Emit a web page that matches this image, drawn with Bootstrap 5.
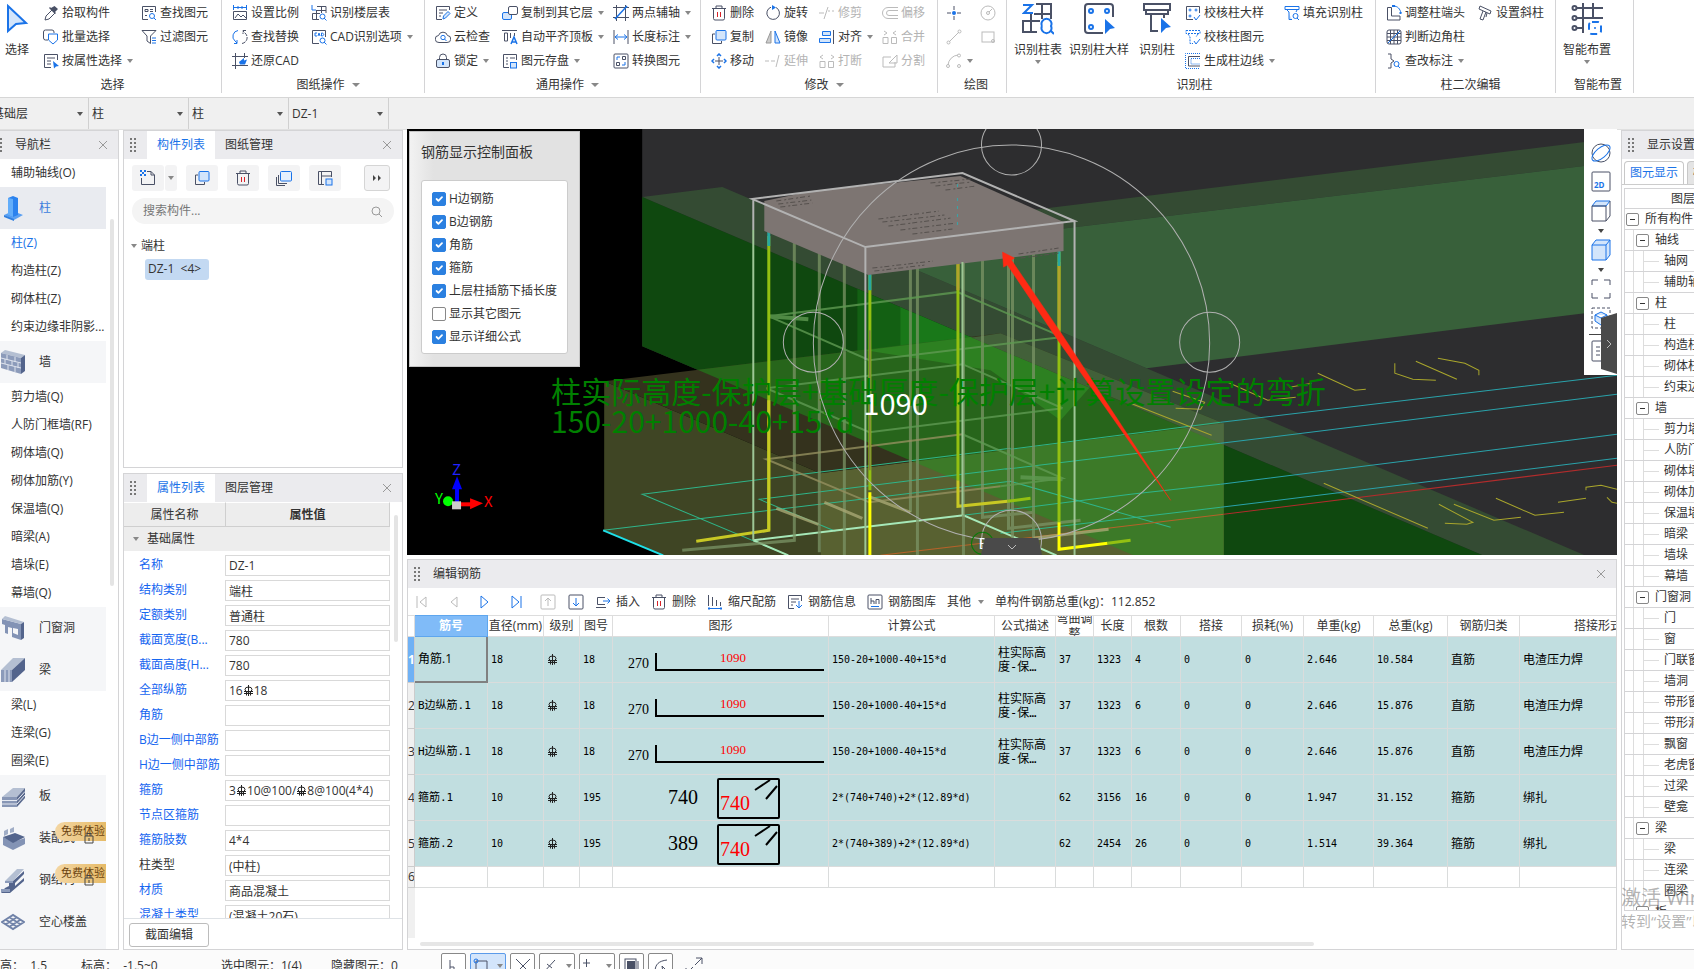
<!DOCTYPE html>
<html lang="zh-CN">
<head>
<meta charset="utf-8">
<meta name="viewport" content="width=device-width, initial-scale=1">
<title>编辑钢筋</title>
<link rel="stylesheet" href="https://cdn.jsdelivr.net/npm/bootstrap@5.3.0/dist/css/bootstrap.min.css">
<style>
:root{--ink:#333;--navy:#4a5166;--blue:#1a73e8;--line:#d4d4d6;--head:#ebebee}
body{font:12px/16px "Open Sans","Noto Sans CJK SC",sans-serif;color:var(--ink);background:#fff}
button{color:inherit;font:inherit;line-height:16px}
svg{display:block;flex:none}
.ic{width:16px;height:16px}
.n{stroke:var(--navy);fill:none}.b{stroke:var(--blue);fill:none}.g{stroke:#bbb;fill:none}.r{stroke:#d8232a;fill:none}
.bf{fill:var(--blue)}.lf{fill:#d3e5fb}
/* ribbon */
.ribbon{height:98px;border-bottom:1px solid #d6d6d6;flex:none}
.rgroup{height:93px;border-right:1px solid var(--line);padding:1px 0 0 10px;flex:none}
.rcols{display:grid;height:72px}
.g1{width:222px;padding-left:4px}.g1 .rcols{grid-template-columns:39px 98px auto}
.g2{width:203px}.g2 .rcols{grid-template-columns:79px auto}
.g3{width:276px}.g3 .rcols{grid-template-columns:67px 111px auto}
.g4{width:237px}.g4 .rcols{grid-template-columns:54px 54px 63px auto}
.g5{width:69px;padding-left:8px}.g5 .rcols{grid-template-columns:34px auto}
.g6{width:369px;padding-left:7px}.g6 .rcols{grid-template-columns:55px 70px 46px 99px auto}
.g7{width:180px}.g7 .rcols{grid-template-columns:91px auto}
.g8{width:78px;padding-left:7px}.g8 .rcols{grid-template-columns:auto}
.tool{border:0;background:none;padding:0;height:24px;display:flex;align-items:center;gap:3px;white-space:nowrap}
.tool:disabled{color:#b3b3b3}
.bigtool{border:0;background:none;padding:1px 0 0;display:flex;flex-direction:column;align-items:center;justify-self:start;align-self:start;gap:6px;white-space:nowrap}
.bigtool .bi{width:32px;height:34px}
.g1 .bi{width:26px}
.cr{width:0;height:0;border:3px solid transparent;border-top:4px solid #888;border-bottom:0;margin-left:2px}
.bigtool .cr{margin:-4px 0 0}
.rlabel{height:24px;display:flex;align-items:center;justify-content:center;gap:5px}
.rlabel .cr{border-width:4px 4px 0}
/* selectors */
.pickers{height:32px;background:#f0f0f0;border-bottom:1px solid #e0e0e0;flex:none}
.pick{width:100px;border-right:1px solid #d0d0d0;position:relative;overflow:hidden}
.pick:first-child{width:89px}
.pick select{appearance:none;border:0;background:none;width:100%;height:31px;padding:0 16px 0 3px;color:var(--ink)}
.pick:first-child select{width:100px;margin-left:-11px}
.pick::after{content:"";position:absolute;right:5px;top:14px;border:3px solid transparent;border-top:4px solid #555;border-bottom:0;pointer-events:none}
/* shared panel parts */
.work{gap:4px;min-height:0}
.pane{border:1px solid var(--line);background:#fff;min-height:0}
.phead{height:28px;background:var(--head);flex:none;white-space:nowrap}
.grip{width:7px;height:14px;background:radial-gradient(circle at 1px 1px,#777 1px,transparent 1px) 0 0/4px 4px;flex:none;margin:0 6px}
.navpane .grip{width:3px;margin:0 6px 0 0}
.ptitle{padding-left:6px}
.xbtn{border:0;background:none;padding:0;width:10px;height:10px;margin:0 10px 0 auto}
.thumb{width:4px;border-radius:2px;background:#e4e4e4}
/* navigation */
.navpane{width:119px;flex:none;border-left:0}
.navlist{width:106px;overflow:hidden;flex:none}
.navlist a{display:flex;align-items:center;height:28px;padding-left:11px;white-space:nowrap;color:var(--ink);text-decoration:none}
.navlist a.grp{height:42px;background:#f5f6f8;padding-left:1px;gap:14px;position:relative}
.navlist a.grp.on{background:#e9ebf0;color:#3b7ddd}
.navlist a.cur{color:#1a73e8}
.navlist svg.ni{width:24px;height:26px}
.free{position:absolute;left:55px;top:5px;width:51px;height:19px;border-radius:10px 0 0 10px;background:linear-gradient(90deg,#f3d6a3,#e6bb68);color:#6b430f;padding:1px 0 0 6px;font-size:11px}
.lock{position:absolute;left:84px;top:14px;width:10px;height:14px}
.thumb.nv{margin:60px 0 0 4px;height:367px}
/* component list */
.side{width:280px;flex:none;gap:5px}
.complist{height:338px;flex:none}
.tab{border:0;background:none;padding:0 10px;height:28px}
.tab.on{background:#fff;color:var(--blue);margin-left:4px}
.ctools{gap:9px;padding:6px 10px 0 8px}
.sq{border:0;background:#f3f3f4;border-radius:3px;width:32px;height:26px;display:flex;align-items:center;justify-content:center;padding:0}
.sq.nar{width:12px;margin-left:-8px}.sq.nar .cr{margin:0}
.sq.more{width:26px;border:1px solid #d5d5d5;margin-left:14px}
.find{height:26px;border-radius:13px;background:#f4f4f4;margin:7px 8px 0;padding:0 12px 0 11px}
.find input{border:0;background:none;flex:1;min-width:0;padding:0;color:#555;outline:0}
.find input::placeholder{color:#777;opacity:1}
.node{padding:14px 0 0 7px}
.pill{background:#c3d9f2;border-radius:3px;height:21px;padding:2px 3px;width:64px;white-space:pre;margin:5px 0 0 21px}
/* properties */
.pscroll{height:0;min-height:0}
.props{display:grid;grid-template-columns:101px 1fr;width:266px;flex:none;align-content:start;overflow:hidden}
.props>*{height:25px}
.props .h{background:#ededed;border-bottom:1px solid #cfcfcf;border-top:1px solid #fff;display:flex;align-items:center;justify-content:center}
.props .h+.h{border-left:1px solid #cfcfcf;font-weight:700;border-right:1px solid #cfcfcf}
.props .sec{grid-column:1/3;background:#ededed;display:flex;align-items:center;padding-left:9px;gap:8px;height:24px;margin-bottom:2px}
.props label,.props .lb{color:#1565f0;padding:4px 0 0 15px;white-space:nowrap;overflow:hidden}
.props .dk{color:var(--ink)}
.props input,.props .fld{border:1px solid #d9d9d9;height:21px;margin:2px 0 2px;padding:0 3px;width:100%;min-width:0;color:var(--ink);background:#fff;display:flex;align-items:center;white-space:nowrap}
.phi{width:11px;height:12px;display:inline-block}
.thumb.pv{height:127px;margin:13px 0 0 4px}
.sectrow{height:30px;padding:2px 0 0 5px}
.sectbtn{width:80px;height:24px;border:1px solid #bcbcbc;border-radius:3px;background:#fff;padding:0}
/* 3D view */
.mid{min-width:0;gap:4px;margin-top:-1px}
.view{height:426px;position:relative;overflow:hidden;background:#000;flex:none}
.view>svg{width:100%;height:426px}
.ctrl{position:absolute;left:2px;top:2px;width:171px;height:236px;background:linear-gradient(90deg,#f2f2f2,#e2e2e2 14%);border:1px solid #c4c4c4;padding:11px}
.ctrl h2{font-size:14px;line-height:18px;font-weight:400;margin:0 0 19px}
.ctrl .bx{background:#fff;border:1px solid #ccc;border-radius:3px;height:174px;padding:6px 0 0 10px}
.ctrl .form-check{min-height:23px;height:23px;margin:0;padding:0;display:flex;align-items:center;gap:3px;white-space:nowrap}
.ctrl .form-check-input{width:14px;height:14px;margin:0;float:none;border:1px solid #888;border-radius:2px}
.ctrl .form-check-input:checked{background-color:#2b80e0;border-color:#2b80e0}
.vbar{position:absolute;right:0;top:0;width:33px;height:246px;background:#fff;display:flex;flex-direction:column;align-items:center;padding-top:13px;gap:7px}
.vbar svg{width:20px;height:22px}
.vbar button{border:0;background:none;padding:0}
.vbar .cr{margin:0 0 -1px;border-top-color:#444}
.vbar hr{width:24px;margin:-2px 0;border-top:1px solid #444;opacity:1}
.flap{position:absolute;background:#4a4a4a;color:#bbb;border:0;padding:0;display:flex;align-items:center;justify-content:center}
.flap.rt{right:0;top:184px;width:16px;height:61px;clip-path:polygon(100% 0,0 8%,0 92%,100% 100%)}
.flap.bt{left:574px;bottom:0;width:61px;height:17px;clip-path:polygon(6% 0,94% 0,100% 100%,0 100%)}
/* rebar editor */
.etools{height:27px;padding:0 8px;white-space:nowrap;flex:none}
.etools .tool{gap:5px}
.steps{gap:15px;margin-right:15px}
.acts{gap:11px;margin-left:11px}
.ewrap{overflow:hidden;flex:1;min-height:0;display:flex;flex-direction:column}
.tgrow{flex:1;width:7px;background:#f0f0f0}
.rebar{table-layout:fixed;width:1269px;border-collapse:separate;border-spacing:0;flex:none}
.rebar col:nth-child(1){width:7px}.rebar col:nth-child(2){width:73px}.rebar col:nth-child(3){width:56px}
.rebar col:nth-child(4){width:36px}.rebar col:nth-child(5){width:33px}.rebar col:nth-child(6){width:216px}
.rebar col:nth-child(7){width:166px}.rebar col:nth-child(8){width:61px}.rebar col:nth-child(9){width:38px}
.rebar col:nth-child(10){width:38px}.rebar col:nth-child(11){width:49px}.rebar col:nth-child(12){width:61px}
.rebar col:nth-child(13){width:62px}.rebar col:nth-child(14){width:70px}.rebar col:nth-child(15){width:74px}
.rebar col:nth-child(16){width:72px}.rebar col:nth-child(17){width:157px}
.rebar th{height:22px;border:1px solid #ddd;border-width:1px 1px 1px 0;font-weight:400;text-align:center;padding:0;white-space:nowrap;overflow:hidden}
.rebar th.sel{background:#80bbf8;color:#fff;font-weight:700;border-color:#5ea6ee}
.rebar th .two{height:20px;line-height:15px;white-space:normal;display:flex;align-items:center;justify-content:center;margin:0 -1px}
.rebar td{height:46px;background:#c1dee0;border:1px solid #dadcdc;border-width:0 1px 1px 0;padding:0 3px;vertical-align:middle;font-family:"DejaVu Sans Mono","Noto Sans CJK SC",monospace;font-size:10px;line-height:14px;color:#000;overflow:hidden;white-space:nowrap}
.rebar td.zh{font-size:12px}
.rebar td.mx{font-size:11px}
.rebar td.ds{font-size:12px;line-height:14px;white-space:normal}
.rebar td.sp{padding:0}
.rebar td.act{font:12px/16px "Open Sans","Noto Sans CJK SC",sans-serif;border-right:2px solid #808080;border-bottom:2px solid #808080}
.rebar td.no{background:#f0f0f0;padding:0;font:12px/16px "Open Sans",sans-serif;color:#333;border-color:#ccc}
.rebar td.no.on{background:#6fb1f5;color:#fff;font-weight:700}
.rebar .last td{height:21px;background:#fff}
.rebar .last td.no{background:#f0f0f0}
.rebar svg text{font-family:"Liberation Serif",serif}
.hbar{height:4px;width:74%;margin:0 0 3px 12px;border-radius:2px;background:#e6e6e6;flex:none}
/* display settings */
.disp{flex:none;width:73px;border-right:0;overflow:hidden;white-space:nowrap;position:relative}
.dtabs{height:26px;padding:2px 0 0 2px;border-bottom:1px solid #ccc;gap:3px}
.dtabs button{border:1px solid #c8c8c8;border-bottom:0;border-radius:4px 4px 0 0;background:#e4e4e4;padding:0 5px;color:#333;flex:none}
.dtabs .on{background:#fff;color:var(--blue)}
.tree{margin:3px 0 0 2px;padding:0;border:1px solid var(--line);border-right:0;list-style:none;height:723px;overflow:hidden}
.tree li{height:21px;border-bottom:1px solid var(--line);display:flex;align-items:center;gap:6px;padding-left:1px}
.tree .c2{padding-left:11px;background:linear-gradient(#ddd,#ddd) 8px 0/1px 100% no-repeat}
.tree .c3{padding-left:39px;background:linear-gradient(#ddd,#ddd) 8px 0/1px 100% no-repeat,linear-gradient(#ddd,#ddd) 18px 0/1px 100% no-repeat,linear-gradient(#ddd,#ddd) 18px 10px/16px 1px no-repeat}
.tree i{width:13px;height:13px;border:1px solid #888;border-radius:2px;background:linear-gradient(#333,#333) center/5px 1px no-repeat #fff;flex:none}
.tree .th{padding-left:46px;height:20px}
.wmark{position:absolute;left:-1px;bottom:17px;color:rgba(130,130,130,.6);font:15px/22px "Open Sans","Noto Sans CJK SC",sans-serif}
.wmark b{font-weight:400;font-size:20px;line-height:24px;display:block}
/* status */
.status{height:19px;background:#fbfbfb;overflow:hidden;flex:none;padding-top:3px;white-space:nowrap;position:relative;align-items:flex-start}
.status span{line-height:26px}
.status .s1{width:81px;text-indent:-12px}.status .s2{width:140px}.status .s3{width:110px}.status .s4{width:110px}
.sbt{height:26px;border:1px solid #888;border-radius:2px;background:#fff;display:flex;align-items:center;justify-content:center;width:25px;padding:0;margin-right:4px}
.sbt.w{width:36px}.sbt.on{background:#d3e5fb;border-color:#5b9bea}
</style>
</head>
<body class="d-flex flex-column vh-100 overflow-hidden">

<svg width="0" height="0" class="position-absolute">
<symbol id="i-pickr" viewBox="0 0 16 16"><path d="M9 5l3 3-6 6-4 1 1-4z" class="n"/><path d="M11.500 1l3.500 3-3 3 1 1-1 1-6-6 1-1 1 1z" fill="#4a5166"/></symbol>
<symbol id="i-batch" viewBox="0 0 16 16"><path d="M5 11H2.500A2 2 0 0 1 .5 9V3a2 2 0 0 1 2-2H9a2 2 0 0 1 2 2v1" class="n"/><path d="M5.500 5h9v6l-4.500 4-4.500-4z" class="b"/></symbol>
<symbol id="i-attr" viewBox="0 0 16 16"><path d="M8 14.500H1.500v-13h13V7M4 5h8M4 8h4M4 11h4" class="n"/><path d="M10 8l6 5-3 .5-2 2z" class="bf"/></symbol>
<symbol id="i-find" viewBox="0 0 16 16"><path d="M7 14.500H1.500v-13h13V7M4 4.500h3v2H4zM9 4.500h3M9 6.500h3M4 10.500h2" class="n"/><circle cx="11" cy="11" r="2.500" class="b"/><path d="M13 13l2 2" class="b"/></symbol>
<symbol id="i-filter" viewBox="0 0 16 16"><path d="M1 1.500h14L9.500 7v7.500L6 12V7z" class="n"/><path d="M11 9h4M11 11.500h4M11 14h4" class="b"/></symbol>
<symbol id="i-scale" viewBox="0 0 16 16"><path d="M1 2.500h14M1.500 0v5M14.500 0v5M6 1v3M10 1v3" class="b"/><path d="M1.500 6.500v8h13v-8zM3 13l3-4 3 3 2-2 3 3" class="n"/></symbol>
<symbol id="i-repl" viewBox="0 0 16 16"><path d="M6 1.500A6 6 0 0 0 3 12l2 2M2 14.500h3V11" class="b"/><path d="M10 14.500A6 6 0 0 0 13 4l-2-2M14 1.500h-3V5" class="n" stroke-dasharray="4 1"/></symbol>
<symbol id="i-rest" viewBox="0 0 16 16"><path d="M3.500 0v16M12.500 0v5M0 3.500h16M0 12.500h16" class="n"/><path d="M7 9l5-4v2.500l3-1-2 5H8z" class="bf"/></symbol>
<symbol id="i-floor" viewBox="0 0 16 16"><path d="M1 0v5h4" class="b"/><path d="M6 1.500h9V8M5.500 5.500H15M10.500 1v7M8 14.500H1.500V8.500H9M5.500 5v9" class="n"/><circle cx="11.500" cy="11.500" r="2.500" class="b"/><path d="M13 13l2.500 2.500" class="b"/></symbol>
<symbol id="i-cad" viewBox="0 0 16 16"><path d="M8 14.500H1.500v-13h13V8" class="n"/><path d="M6 4H4v3h2M7 7l1-3 1 3M10.500 4v3c3 0 3-3 0-3" class="b"/><circle cx="11.500" cy="11.500" r="2.500" class="b"/><path d="M13 13l2.500 2.500" class="b"/></symbol>
<symbol id="i-def" viewBox="0 0 16 16"><path d="M7 14.500H1.500v-13h13V5M4 5h8M4 8h4M4 11h2" class="n"/><path d="M8 14l.5-3L13 6.500l2 2L10.500 13z" class="b lf"/></symbol>
<symbol id="i-cloud" viewBox="0 0 16 16"><path d="M4 13.500a3.500 3.500 0 0 1-.5-7 4.700 4.700 0 0 1 9 0 3.500 3.500 0 0 1-.5 7z" class="n"/><circle cx="8" cy="8.500" r="2.200" class="b"/><path d="M9.500 10l2 2" class="b"/></symbol>
<symbol id="i-lock" viewBox="0 0 16 16"><path d="M4.500 7V4.500a3.500 3.500 0 0 1 7 0V7" class="n"/><rect x="1.500" y="6.500" width="13" height="8" rx="1.500" class="n lf"/><path d="M8 9v3" class="b" stroke-width="2"/></symbol>
<symbol id="i-copyl" viewBox="0 0 16 16"><rect x=".5" y="7.500" width="9" height="7" rx="1.500" class="b lf"/><rect x="6.500" y="1.500" width="9" height="8" rx="1.500" stroke="#4a5166" fill="#fff"/></symbol>
<symbol id="i-align" viewBox="0 0 16 16"><path d="M0 1.500h15M2.500 4v8h3V4zM8.500 4v5M12.500 4v3" class="n"/><path d="M9 15l3-7 3 7M10 13h4" class="b" stroke-width="1.500"/></symbol>
<symbol id="i-save" viewBox="0 0 16 16"><path d="M7 14.500H1.500v-13h13V7M4 5h2M8 5h5M4 8h2M4 11h2" class="n"/><rect x="8.500" y="9.500" width="6" height="5.500" class="b lf"/></symbol>
<symbol id="i-two" viewBox="0 0 16 16"><path d="M3.500 0v16M12.500 0v16M0 2.500h16M0 12.500h16" class="n"/><path d="M2 14L14 1" class="b" stroke-width="1.500"/></symbol>
<symbol id="i-len" viewBox="0 0 16 16"><path d="M1 1v14M15 1v14" class="n"/><path d="M2 8h12M5 5.500L2 8l3 2.500M11 5.500L14 8l-3 2.500" class="b"/></symbol>
<symbol id="i-conv" viewBox="0 0 16 16"><rect x="1" y="1" width="14" height="14" rx="1" class="n"/><path d="M9.500 3.500h3v3h-3zM3.500 9.500h3v3h-3z" class="n"/><path d="M4 7V4h3M12 9v3H9" class="b"/></symbol>
<symbol id="i-del" viewBox="0 0 16 16"><path d="M1 3.500h14M5 3V1h6v2M2.500 4v9.500a1.500 1.500 0 0 0 1.500 1.500h8a1.500 1.500 0 0 0 1.500-1.500V4" class="n"/><path d="M6.500 7v5M9.500 7v5" class="r"/></symbol>
<symbol id="i-copy" viewBox="0 0 16 16"><path d="M4 5H1.500v9.500h9V12" class="n"/><rect x="5" y="1.500" width="10" height="9.500" rx="1" class="b lf"/></symbol>
<symbol id="i-move" viewBox="0 0 16 16"><path d="M8 4v8M4 8h8" class="n"/><path d="M6 3l2-2 2 2M6 13l2 2 2-2M3 6L1 8l2 2M13 6l2 2-2 2" class="b" stroke-width="1.500"/></symbol>
<symbol id="i-rot" viewBox="0 0 16 16"><path d="M6 2.200a6.300 6.300 0 1 0 5 .3" class="n"/><path d="M7 0l4 2.500L7 5z" class="bf"/></symbol>
<symbol id="i-mir" viewBox="0 0 16 16"><path d="M6 2v12H1z" fill="#ccc" stroke="#999"/><path d="M10 2v12h5z" class="b lf"/></symbol>
<symbol id="i-ext" viewBox="0 0 16 16"><path d="M0 8h4M6 8h4M11 14l3-12" class="g"/></symbol>
<symbol id="i-trim" viewBox="0 0 16 16"><path d="M0 8h5M5 14L9 2M9 6h2M13 6h2" class="g"/></symbol>
<symbol id="i-dui" viewBox="0 0 16 16"><path d="M14.500 1v14" class="n"/><path d="M3.500 2.500h8v4h-8zM.5 9.500h11v4H.5z" class="b lf"/></symbol>
<symbol id="i-brk" viewBox="0 0 16 16"><path d="M1 8.500h5v6H1zM9.500 8.500h5v6h-5zM4 2L1 4l3 2M12 2l3 2-3 2" class="g"/></symbol>
<symbol id="i-off" viewBox="0 0 16 16"><path d="M16 2.500H6a5.500 5.500 0 0 0 0 11h10M16 5.500H7a2.500 2.500 0 0 0 0 5h9" class="g"/></symbol>
<symbol id="i-mrg" viewBox="0 0 16 16"><path d="M1 8.500h5v6H1zM9.500 8.500h5v6h-5zM2 2l3 2-3 2M14 2l-3 2 3 2" class="g"/></symbol>
<symbol id="i-spl" viewBox="0 0 16 16"><path d="M9 4H1v10h12V9M7 10l8-8v8z" class="g"/></symbol>
<symbol id="i-pt" viewBox="0 0 16 16"><path d="M8 1v4M8 11v4M1 8h4M11 8h4" class="n"/><circle cx="8" cy="8" r="2" class="bf"/></symbol>
<symbol id="i-circ" viewBox="0 0 16 16"><circle cx="8" cy="8" r="7" class="g"/><circle cx="8" cy="8" r="1.500" class="g"/><path d="M9 7l3-3" class="g"/></symbol>
<symbol id="i-line" viewBox="0 0 16 16"><path d="M3 13L13 3" class="g"/><circle cx="2.500" cy="13.500" r="1.500" class="g"/><circle cx="13.500" cy="2.500" r="1.500" class="g"/></symbol>
<symbol id="i-rect" viewBox="0 0 16 16"><rect x="2" y="3" width="12" height="10" class="g"/><circle cx="13" cy="12" r="1.500" class="g"/></symbol>
<symbol id="i-arc" viewBox="0 0 16 16"><path d="M2 12A11 11 0 0 1 12 2" class="g"/><circle cx="2" cy="13" r="1.500" class="g"/><circle cx="13" cy="2.500" r="1.500" class="g"/><circle cx="13" cy="13" r="1.500" class="g"/></symbol>
<symbol id="i-chk" viewBox="0 0 16 16"><path d="M8 14.500H1.500v-13h13V8" class="n"/><g class="b"><circle cx="5" cy="5" r="1"/><circle cx="11" cy="5" r="1"/><circle cx="5" cy="11" r="1"/><path d="M9 12l2 3 4-5"/></g></symbol>
<symbol id="i-chk2" viewBox="0 0 16 16"><g class="b"><path d="M1 1.500h14v3H1zM3 5l2 3v6.500h3M13 5l-2 3" stroke-dasharray="2 1"/><path d="M9 12l2 3 4-5"/></g></symbol>
<symbol id="i-edge" viewBox="0 0 16 16"><path d="M15 .5H.5v15H15M15 5.500H6V11h9" class="b" stroke-dasharray="1 1"/><path d="M15 3.500H3.500v9.500H15" class="n"/></symbol>
<symbol id="i-fill" viewBox="0 0 16 16"><g class="b"><path d="M1 1.500h14v3H1z"/><path d="M3 5l2 2v7.500h3M13 5l-1 2" class="lf"/><circle cx="11.500" cy="11" r="2.500"/><path d="M13 13l2 2"/></g></symbol>
<symbol id="i-end" viewBox="0 0 16 16"><path d="M1.500 2.500h4V11H14v4H1.500z" class="n"/><path d="M7 1c5 0 7 3 8 7" class="b"/><path d="M6 0h3v2H6zM13.500 7h2v2h-2z" class="bf"/></symbol>
<symbol id="i-corner" viewBox="0 0 16 16"><rect x="1" y="1" width="14" height="14" rx="2" class="n"/><path d="M4.500 1v14M8 1v14M11.500 1v14M1 4.500h14M1 8h14M1 11.500h14" class="n"/><path d="M2 14L14 2" class="b"/></symbol>
<symbol id="i-mark" viewBox="0 0 16 16"><path d="M2 1h3v5l3 2-3 2v5H2" class="n"/><circle cx="10.500" cy="11" r="2.500" class="b"/><path d="M12 13l2 2" class="b"/></symbol>
<symbol id="i-incl" viewBox="0 0 16 16"><path d="M3 1l11 5-1 3L2 4zM6 6l-3 8 3 1 3-8M10 8l-1 4" class="n"/></symbol>
<symbol id="i-new" viewBox="0 0 16 16"><path d="M7 1.500h4L14.500 5v9.500h-13V8M11 1.500V5h3.500" class="n"/><path d="M0 0h2v2H0zM4 0h2v2H4zM2 2h2v2H2zM0 4h2v2H0zM4 4h2v2H4z" class="bf"/></symbol>
<symbol id="i-layers" viewBox="0 0 16 16"><path d="M.5 7v8.500H9M2.500 5v8.500H11" class="n"/><rect x="4.500" y="1.500" width="11" height="9.500" rx="1" fill="#e5f0fd" stroke="#1a73e8"/></symbol>
<symbol id="i-sv" viewBox="0 0 16 16"><path d="M7 14.500H1.500v-13h13V7M4.500 2v12M4.500 6h10" class="n"/><rect x="9" y="9" width="6" height="6" class="b lf"/></symbol>
<symbol id="i-ins" viewBox="0 0 16 16"><path d="M10 3.500H2.500v7H10M1 13.500h10" class="n"/><path d="M8 7h7M12.500 4.500L15 7l-2.500 2.500" class="b"/></symbol>
<symbol id="i-ruler" viewBox="0 0 16 16"><path d="M1.500 1v11M5.500 3v9M9.500 6v6M13.500 8v4" class="n"/><path d="M1 14.500h14M2 13v3M14 13v3" class="b"/></symbol>
<symbol id="i-info" viewBox="0 0 16 16"><path d="M7 14.500H1.500v-13h13V7M4 5h8M4 8h5M4 11h2" class="n"/><path d="M12 7v7M9 11l3 3 3-3" class="b"/></symbol>
<symbol id="i-lib" viewBox="0 0 16 16"><rect x="1" y="1" width="14" height="14" rx="1" class="n"/><path d="M4 4v6M4 7h3v3M9 10V5.500h3V10" class="n"/><path d="M4 12.500h8" class="b"/></symbol>
<symbol id="i-x" viewBox="0 0 10 10"><path d="M1 1l8 8M9 1L1 9" stroke="#999" fill="none"/></symbol>
<symbol id="i-phi" viewBox="0 0 11 12"><path d="M5.500 0v11M1 6.500h9M1 8.500h9M3.500 6.500v4M7.500 6.500v4" fill="none" stroke="#222"/><ellipse cx="5.500" cy="4.500" rx="3.500" ry="2.500" fill="none" stroke="#222"/></symbol>
<symbol id="i-slab" viewBox="0 0 24 26"><path d="M1 14L12 5h12l-8 9z" fill="#b4bfd2"/><path d="M1 14h15v10H1z" fill="#8796b5"/><path d="M16 14l8-9v10l-8 9z" fill="#5a6a8e"/><path d="M1 17.500h15l8-9M1 21h15l8-9" stroke="#e6eaf2" fill="none"/></symbol>
</svg>

<header class="ribbon d-flex">
 <div class="rgroup g1"><div class="rcols">
  <button class="bigtool"><svg class="bi" viewBox="0 0 26 34"><path d="M4 4l18 17-10 1-8 7z" stroke="#1a73e8" stroke-width="2" fill="#d3e5fb"/></svg>选择</button>
  <div><button class="tool"><svg class="ic"><use href="#i-pickr"/></svg>拾取构件</button><button class="tool"><svg class="ic"><use href="#i-batch"/></svg>批量选择</button><button class="tool"><svg class="ic"><use href="#i-attr"/></svg>按属性选择<span class="cr"></span></button></div>
  <div><button class="tool"><svg class="ic"><use href="#i-find"/></svg>查找图元</button><button class="tool"><svg class="ic"><use href="#i-filter"/></svg>过滤图元</button></div>
 </div><div class="rlabel">选择</div></div>
 <div class="rgroup g2"><div class="rcols">
  <div><button class="tool"><svg class="ic"><use href="#i-scale"/></svg>设置比例</button><button class="tool"><svg class="ic"><use href="#i-repl"/></svg>查找替换</button><button class="tool"><svg class="ic"><use href="#i-rest"/></svg>还原CAD</button></div>
  <div><button class="tool"><svg class="ic"><use href="#i-floor"/></svg>识别楼层表</button><button class="tool"><svg class="ic"><use href="#i-cad"/></svg>CAD识别选项<span class="cr"></span></button></div>
 </div><div class="rlabel">图纸操作 <span class="cr"></span></div></div>
 <div class="rgroup g3"><div class="rcols">
  <div><button class="tool"><svg class="ic"><use href="#i-def"/></svg>定义</button><button class="tool"><svg class="ic"><use href="#i-cloud"/></svg>云检查</button><button class="tool"><svg class="ic"><use href="#i-lock"/></svg>锁定<span class="cr"></span></button></div>
  <div><button class="tool"><svg class="ic"><use href="#i-copyl"/></svg>复制到其它层<span class="cr"></span></button><button class="tool"><svg class="ic"><use href="#i-align"/></svg>自动平齐顶板<span class="cr"></span></button><button class="tool"><svg class="ic"><use href="#i-save"/></svg>图元存盘<span class="cr"></span></button></div>
  <div><button class="tool"><svg class="ic"><use href="#i-two"/></svg>两点辅轴<span class="cr"></span></button><button class="tool"><svg class="ic"><use href="#i-len"/></svg>长度标注<span class="cr"></span></button><button class="tool"><svg class="ic"><use href="#i-conv"/></svg>转换图元</button></div>
 </div><div class="rlabel">通用操作 <span class="cr"></span></div></div>
 <div class="rgroup g4"><div class="rcols">
  <div><button class="tool"><svg class="ic"><use href="#i-del"/></svg>删除</button><button class="tool"><svg class="ic"><use href="#i-copy"/></svg>复制</button><button class="tool"><svg class="ic"><use href="#i-move"/></svg>移动</button></div>
  <div><button class="tool"><svg class="ic"><use href="#i-rot"/></svg>旋转</button><button class="tool"><svg class="ic"><use href="#i-mir"/></svg>镜像</button><button class="tool" disabled><svg class="ic"><use href="#i-ext"/></svg>延伸</button></div>
  <div><button class="tool" disabled><svg class="ic"><use href="#i-trim"/></svg>修剪</button><button class="tool"><svg class="ic"><use href="#i-dui"/></svg>对齐<span class="cr"></span></button><button class="tool" disabled><svg class="ic"><use href="#i-brk"/></svg>打断</button></div>
  <div><button class="tool" disabled><svg class="ic"><use href="#i-off"/></svg>偏移</button><button class="tool" disabled><svg class="ic"><use href="#i-mrg"/></svg>合并</button><button class="tool" disabled><svg class="ic"><use href="#i-spl"/></svg>分割</button></div>
 </div><div class="rlabel">修改 <span class="cr"></span></div></div>
 <div class="rgroup g5"><div class="rcols">
  <div><button class="tool" aria-label="点"><svg class="ic"><use href="#i-pt"/></svg></button><button class="tool" aria-label="直线"><svg class="ic"><use href="#i-line"/></svg></button><button class="tool" aria-label="弧"><svg class="ic"><use href="#i-arc"/></svg><span class="cr"></span></button></div>
  <div><button class="tool" aria-label="圆"><svg class="ic"><use href="#i-circ"/></svg></button><button class="tool" aria-label="矩形"><svg class="ic"><use href="#i-rect"/></svg></button></div>
 </div><div class="rlabel">绘图</div></div>
 <div class="rgroup g6"><div class="rcols">
  <button class="bigtool"><svg class="bi" viewBox="0 0 32 34"><g fill="none" stroke-width="2"><path d="M1 3h9L2 11h9M20 24a5 5 0 1 1 9 0 5 5 0 1 1-9 0M28 28l4 4" stroke="#1a73e8"/><path d="M14 2h15v15M20 2v15M12 12h17M1 31V19h17M9 12v19M1 30h14" stroke="#4a5166"/></g></svg>识别柱表<span class="cr"></span></button>
  <button class="bigtool"><svg class="bi" viewBox="0 0 32 34"><g fill="none" stroke-width="2"><path d="M20 31H5a3 3 0 0 1-3-3V5a3 3 0 0 1 3-3h22a3 3 0 0 1 3 3v10" stroke="#4a5166"/><g stroke="#1a73e8"><circle cx="8" cy="9" r="2"/><circle cx="24" cy="9" r="2"/><circle cx="8" cy="25" r="2"/></g></g><path d="M22 17l10 9-5 1-5 5z" class="bf"/></svg>识别柱大样</button>
  <button class="bigtool"><svg class="bi" viewBox="0 0 32 34"><path d="M3 2h26v6H3zM5 8v4h22V8M10 12v17h7M23 12v4" fill="none" stroke="#4a5166" stroke-width="2"/><path d="M20 16l10 9-5 1-5 5z" class="bf"/></svg>识别柱</button>
  <div><button class="tool"><svg class="ic"><use href="#i-chk"/></svg>校核柱大样</button><button class="tool"><svg class="ic"><use href="#i-chk2"/></svg>校核柱图元</button><button class="tool"><svg class="ic"><use href="#i-edge"/></svg>生成柱边线<span class="cr"></span></button></div>
  <div><button class="tool"><svg class="ic"><use href="#i-fill"/></svg>填充识别柱</button></div>
 </div><div class="rlabel">识别柱</div></div>
 <div class="rgroup g7"><div class="rcols">
  <div><button class="tool"><svg class="ic"><use href="#i-end"/></svg>调整柱端头</button><button class="tool"><svg class="ic"><use href="#i-corner"/></svg>判断边角柱</button><button class="tool"><svg class="ic"><use href="#i-mark"/></svg>查改标注<span class="cr"></span></button></div>
  <div><button class="tool"><svg class="ic"><use href="#i-incl"/></svg>设置斜柱</button></div>
 </div><div class="rlabel">柱二次编辑</div></div>
 <div class="rgroup g8"><div class="rcols">
  <button class="bigtool"><svg class="bi" viewBox="0 0 32 34"><g fill="none" stroke-width="2"><path d="M6 6h26M6 16h26M6 26h7M12 1v30M22 1v14" stroke="#4a5166"/><g stroke="#4a5166"><circle cx="3.500" cy="6" r="2"/><circle cx="3.500" cy="16" r="2"/><circle cx="3.500" cy="26" r="2"/></g><rect x="18" y="20" width="12" height="12" rx="3" stroke="#1a73e8" stroke-dasharray="7 4"/></g><circle cx="24" cy="26" r="1" class="bf"/></svg>智能布置<span class="cr"></span></button>
 </div><div class="rlabel">智能布置</div></div>
</header>

<div class="pickers d-flex">
 <div class="pick"><select aria-label="楼层"><option>基础层</option></select></div>
 <div class="pick"><select aria-label="构件大类"><option>柱</option></select></div>
 <div class="pick"><select aria-label="构件类型"><option>柱</option></select></div>
 <div class="pick"><select aria-label="构件"><option>DZ-1</option></select></div>
</div>

<main class="work d-flex flex-grow-1">
 <nav class="pane navpane d-flex flex-column">
  <div class="phead d-flex align-items-center"><span class="grip"></span><span class="ptitle">导航栏</span><button class="xbtn" aria-label="关闭"><svg width="10" height="10"><use href="#i-x"/></svg></button></div>
  <div class="d-flex overflow-hidden">
  <div class="navlist">
   <a href="#">辅助轴线(O)</a>
   <a href="#" class="grp on"><svg class="ni" viewBox="0 0 24 26"><path d="M3 20l9-4 10 4-9 5z" fill="#5aa0f2"/><path d="M3 20l10 4v2L3 22z" fill="#2f7fe0"/><path d="M7 3l5-2 5 2v17l-5 2-5-2z" fill="#2b82ee"/><path d="M7 3l5 1v18l-5-2z" fill="#62adfa"/></svg>柱</a>
   <a href="#" class="cur">柱(Z)</a><a href="#">构造柱(Z)</a><a href="#">砌体柱(Z)</a><a href="#">约束边缘非阴影...</a>
   <a href="#" class="grp"><svg class="ni" viewBox="0 0 24 26"><path d="M0 4l4-3 20 5-4 3z" fill="#b4bfd2"/><path d="M0 4l20 5v16L0 19z" fill="#8c9bba"/><path d="M20 9l4-3v16l-4 3z" fill="#53648c"/><path d="M0 9l20 5M0 14l20 5M6 6v5M14 8v5M4 10v5M11 12v5M17 14v5M7 16v5M14 18v5" stroke="#dfe4ee" fill="none"/></svg>墙</a>
   <a href="#">剪力墙(Q)</a><a href="#">人防门框墙(RF)</a><a href="#">砌体墙(Q)</a><a href="#">砌体加筋(Y)</a><a href="#">保温墙(Q)</a><a href="#">暗梁(A)</a><a href="#">墙垛(E)</a><a href="#">幕墙(Q)</a>
   <a href="#" class="grp"><svg class="ni" viewBox="0 0 24 26"><path d="M1 4l19 5v16l-9-3v-9l-4-1v7l-3-1v-8l-3-1z" fill="#8393b5"/><path d="M1 4l3-3 19 6-3 2z" fill="#b4bfd2"/><path d="M20 9l3-2v16l-3 2z" fill="#53648c"/><path d="M12 13l5 1v6l-5-2z" fill="#f5f6f8"/></svg>门窗洞</a>
   <a href="#" class="grp"><svg class="ni" viewBox="0 0 24 26"><path d="M0 13L12 1h12L11 13z" fill="#b4bfd2"/><path d="M0 13h11v12H0z" fill="#8c9bba"/><path d="M11 13L24 1v12L11 25z" fill="#53648c"/><path d="M4 13v12M8 13v12" stroke="#dfe4ee"/></svg>梁</a>
   <a href="#">梁(L)</a><a href="#">连梁(G)</a><a href="#">圈梁(E)</a>
   <a href="#" class="grp"><svg class="ni"><use href="#i-slab"/></svg>板</a>
   <a href="#" class="grp"><svg class="ni" viewBox="0 0 24 26"><path d="M2 12l10 5 12-4v6l-12 6-10-5z" fill="#8393b5"/><path d="M2 12l12-4 10 4-12 6z" fill="#53648c"/><path d="M3 6l4-2v5l-4 2zM9 4l4-2v5l-4 1z" fill="#a0adc6"/></svg>装配式<span class="free">免费体验</span><svg class="lock" viewBox="0 0 10 14"><path d="M3 5V2.500h4V5M1 5h8v7H1zM5 7v3" fill="none" stroke="#444"/></svg></a>
   <a href="#" class="grp"><svg class="ni" viewBox="0 0 24 26"><path d="M4 14L16 2h7L12 14z" fill="#b4bfd2"/><path d="M12 14L23 4v3l-9 9v3l9-8v3L9 26H0l4-5 4-2v-4z" fill="#53648c"/><path d="M0 22h9v3H0zM4 14h8v2H4z" fill="#8c9bba"/></svg>钢结构<span class="free">免费体验</span><svg class="lock" viewBox="0 0 10 14"><path d="M3 5V2.500h4V5M1 5h8v7H1zM5 7v3" fill="none" stroke="#444"/></svg></a>
   <a href="#" class="grp"><svg class="ni" viewBox="0 0 24 26"><path d="M1 13l11-7 11 7-11 7zM4.500 10.500l11 7M8 8l11 7M4.500 15.500l11-7M8 18l11-7" fill="none" stroke="#7082a8" stroke-width="2"/></svg>空心楼盖</a>
   <a href="#" class="grp" aria-label="更多"></a>
  </div><div class="thumb nv"></div></div>
 </nav>

 <div class="side d-flex flex-column">
  <section class="pane complist">
   <div class="phead d-flex align-items-center"><span class="grip"></span><button class="tab on">构件列表</button><button class="tab">图纸管理</button><button class="xbtn" aria-label="关闭"><svg width="10" height="10"><use href="#i-x"/></svg></button></div>
   <div class="ctools d-flex">
    <button class="sq" aria-label="新建"><svg class="ic"><use href="#i-new"/></svg></button><button class="sq nar" aria-label="新建选项"><span class="cr"></span></button><button class="sq" aria-label="复制"><svg class="ic"><use href="#i-copy"/></svg></button><button class="sq" aria-label="删除"><svg class="ic"><use href="#i-del"/></svg></button><button class="sq" aria-label="层间复制"><svg class="ic"><use href="#i-layers"/></svg></button><button class="sq" aria-label="存档"><svg class="ic"><use href="#i-sv"/></svg></button><button class="sq more" aria-label="更多"><svg width="10" height="6"><path d="M1 0l3 3-3 3zM6 0l3 3-3 3z" fill="#444"/></svg></button>
   </div>
   <div class="find d-flex align-items-center"><input type="text" placeholder="搜索构件..." aria-label="搜索构件"><svg width="11" height="11"><circle cx="5" cy="5" r="4" fill="none" stroke="#999"/><path d="M8 8l3 3" stroke="#999"/></svg></div>
   <div class="node d-flex align-items-center"><span class="cr me-1 ms-0"></span>端柱</div>
   <div class="pill">DZ-1  &lt;4&gt;</div>
  </section>

  <section class="pane flex-grow-1 d-flex flex-column">
   <div class="phead d-flex align-items-center"><span class="grip"></span><button class="tab on">属性列表</button><button class="tab">图层管理</button><button class="xbtn" aria-label="关闭"><svg width="10" height="10"><use href="#i-x"/></svg></button></div>
   <div class="pscroll d-flex flex-grow-1 overflow-hidden border-bottom">
   <div class="props">
    <div class="h">属性名称</div><div class="h">属性值</div>
    <div class="sec"><span class="cr m-0"></span>基础属性</div>
    <label for="p1">名称</label><input id="p1" value="DZ-1">
    <label for="p2">结构类别</label><input id="p2" value="端柱">
    <label for="p3">定额类别</label><input id="p3" value="普通柱">
    <label for="p4">截面宽度(B...</label><input id="p4" value="780">
    <label for="p5">截面高度(H...</label><input id="p5" value="780">
    <span class="lb">全部纵筋</span><div class="fld" role="textbox" aria-label="全部纵筋" contenteditable="true">16<svg class="phi"><use href="#i-phi"/></svg>18</div>
    <label for="p7">角筋</label><input id="p7">
    <label for="p8">B边一侧中部筋</label><input id="p8">
    <label for="p9">H边一侧中部筋</label><input id="p9">
    <span class="lb">箍筋</span><div class="fld" role="textbox" aria-label="箍筋" contenteditable="true">3<svg class="phi"><use href="#i-phi"/></svg>10@100/<svg class="phi"><use href="#i-phi"/></svg>8@100(4*4)</div>
    <label for="p11">节点区箍筋</label><input id="p11">
    <label for="p12">箍筋肢数</label><input id="p12" value="4*4">
    <label for="p13" class="dk">柱类型</label><input id="p13" value="(中柱)">
    <label for="p14">材质</label><input id="p14" value="商品混凝土">
    <label for="p15">混凝土类型</label><input id="p15" value="(混凝土20石)">
   </div>
   <div class="thumb pv"></div>
   </div>
   <div class="sectrow d-flex align-items-center"><button class="sectbtn">截面编辑</button></div>
  </section>
 </div>

 <div class="mid d-flex flex-column flex-grow-1">
  <section class="view">
   <svg viewBox="407 129 1209 426" preserveAspectRatio="xMinYMin slice">
    <defs>
     <clipPath id="cg"><path d="M642 197L1482 555H1133L642 346z"/></clipPath>
     <clipPath id="cb"><path d="M642 197L722 187 1584 555H1482z"/></clipPath>
    </defs>
    <path d="M407 129h1209v426H407z" fill="#000"/>
    <path d="M642 129h974v426H1133L642 346z" fill="#2d2d2f"/>
    <path d="M642 197L722 187 1584 555H1482z" fill="#344b33"/>
    <path d="M860 231L1616 138V162L860 253z" fill="#344b33"/>
    <path d="M860 253L1616 162V309L1146 368 860 246z" fill="#38603a"/>
    <path d="M642 197L1482 555H1133L642 346z" fill="#0f480f"/>
    <path d="M604 381L1000 333 1223 423 820 473z" fill="#34321d"/>
    <path d="M604 381L820 473V555H663L604 530z" fill="#3f4524"/>
    <path d="M820 473L1223 423V555H820z" fill="#586131"/>
    <g clip-path="url(#cg)">
     <path d="M857 250h45v110h-45z" fill="#136013"/><path d="M900 250h120v110H900z" fill="#197819"/>
     <path d="M604 381L1000 333 1223 423 820 473z" fill="#27651b"/>
     <path d="M865 350L1000 333 1100 375 1060 420 990 370z" fill="#2d8021"/>
     <path d="M604 381L820 473V555H604z" fill="#285e1e"/>
     <path d="M820 473L1223 423V555H820z" fill="#3c7a28"/>
    </g>
    <g clip-path="url(#cb)"><path d="M820 360L1000 333 1223 423 820 473z" fill="#426039"/><path d="M820 473L1223 423V555H820z" fill="#4c6a40"/></g>
    <g fill="none" stroke="#2fb58a">
     <path d="M788 555L642 494 1010 448M603 530L1010 481 1170 527M835 531L759 499 1010 468M963 515L1130 494 1220 484M1000 533L1220 507M1010 449L1220 422M1005 469L1220 443"/>
     <path d="M1220 422L1616 375M1220 443L1616 394M1220 484L1616 434M1220 507L1616 458" stroke="#2aa3ab"/>
     <path d="M603 530L663 555" stroke="#1fe0e8" stroke-width="2"/>
     <path d="M753 540L963 515 1056 555M753 540L788 555" stroke="#a6e8b8" stroke-width="2"/>
     <path d="M880 555L1223 514" stroke="#b5622a"/><path d="M1223 514L1616 465" stroke="#b22c2c"/>
    </g>
    <g fill="none" stroke="#a9a62c">
     <path d="M1130 403L1211 435M1323 483L1427 528"/>
     <path d="M1227 382L1267 400 1295 397M1289 387L1311 383M1317 373L1354 390 1365 389M1394 363V373L1412 379 1435 380M1415 361L1456 379M1437 358L1464 363 1478 370V375M1175 408L1200 409 1204 402 1172 391M1438 504L1472 522 1466 524 1444 523M1453 504L1493 520 1520 517M1495 498L1534 515 1563 512M1557 502L1585 498M1585 490V487L1600 485 1616 489M1606 497L1611 502 1616 503"/>
    </g>
    <g fill="none" stroke="#7b9466" stroke-width="3" opacity=".75">
     <path d="M794 240V540L682 550M819 250V552M844 260V555M910 264V512M917 264V555M963 255V555M982 252V517L1033 512M1008 248V528L1080 520M1012 248V540M1033 244V555"/>
    </g>
    <g fill="none" stroke="#5f9a52" stroke-width="2" opacity=".8">
     <path d="M768 316L957 292 1060 336M768 316L869 360 1060 337M766 388L962 364 1062 408M766 388L869 432 1062 408"/><path d="M768 316l40 3M1020 477l42 2" stroke-width="4"/>
     <path d="M962 434L1062 478 1000 486"/>
     <path d="M962 434L766 459 869 502 1000 486" stroke="#94905f"/>
     <path d="M776 508l42 16M824 502l38 16M868 496l42 16M1033 538l75-9" stroke="#a8a874" stroke-width="3"/>
    </g>
    <g fill="none" stroke="#93c012" stroke-width="3">
     <path d="M768.500 236V530M869.500 275V490M957.500 262V480M1058.500 252V522"/>
     <path d="M957.500 262V290M1058.500 262V330" stroke="#b0a42c"/>
     <path d="M768.500 400V530L696 541M957.500 480V506L1007 501" stroke="#c8c824"/>
     <path d="M869.500 492V555M1058.500 522V549L1107 543" stroke="#ff0"/>
     <path d="M1007 501l23-3M1107 543l23-3"/>
     <path d="M768.500 231V246M869.500 274V290M1058.500 250V266" stroke="#28a8a0"/>
     <path d="M869.500 330V470" stroke="#7a5a6a" stroke-width="1"/>
    </g>
    <path d="M764 201L812 191 960 176 1063 222V251L868 275 764 231z" fill="#7d7572"/>
    <path d="M776 201l34-5M778 204l33-4M780 207l32-4M878 219l60-8M882 222l62-7M888 226l62-8M900 230l55-7M912 234l40-5M930 183l40-4M935 186l35-4M945 190l30-4M1018 254l40-6M1020 258l38-5M872 268l60-7M874 271l50-6" stroke="#56514e" stroke-dasharray="5 3 2 2" fill="none"/>
    <g fill="none" stroke="#b2b2b2" stroke-width="2">
     <path d="M752 199L962 173 1074 221 865 247zM753 199V230M865 247V360M1074 221V360"/>
     <path d="M753 230V540M865 360V555M1074 360V555M962 262V515" stroke="#9dc695"/>
    </g>
    <path d="M957 184v7M957 198v30" stroke="#3aa5a8" stroke-dasharray="3 5"/>
    <g fill="#008000" font-family="Noto Sans CJK SC" font-size="30"><text x="551" y="403">柱实际高度-保护层+基础厚度-保护层+计算设置设定的弯折</text><text x="551" y="433">150-20+1000-40+15*d</text></g>
    <text x="863" y="415" fill="#fff" font-family="Noto Sans CJK SC" font-size="29">1090</text>
    <g fill="none" stroke="#b0b0b0"><circle cx="1011" cy="343" r="198"/><circle cx="1011" cy="145" r="30"/><circle cx="813" cy="342" r="30"/><circle cx="1209" cy="342" r="30"/><circle cx="1011" cy="540" r="30"/></g>
    <circle cx="982" cy="543" r="11" fill="none" stroke="#0a7a0a"/><text x="978" y="549" fill="#fff" font-family="Noto Sans CJK SC" font-size="15">B</text>
    <path d="M1002 252L1014 258 1011 260 1062 335 1170 500 1056 338 1007 265 1003 267z" fill="#ff2a14" stroke="#ff2a14" stroke-width=".5"/>
    <path d="M457 503V486" stroke="#00f" stroke-width="4"/><path d="M452 489h10l-5-13z" fill="#00f"/>
    <path d="M460 504h13" stroke="#f00" stroke-width="4"/><path d="M470 498v11l13-6z" fill="#f00"/><circle cx="448" cy="501" r="5" fill="#0f0"/><path d="M452 501h9v8h-9z" fill="#ccc"/>
    <g font-family="Noto Sans CJK SC" font-size="15"><text x="452" y="475" fill="#22f">Z</text><text x="435" y="504" fill="#0f0">Y</text><text x="484" y="507" fill="#f00">X</text></g>
   </svg>
   <div class="ctrl"><h2>钢筋显示控制面板</h2><div class="bx">
    <div class="form-check"><input class="form-check-input" type="checkbox" id="c1" checked><label for="c1">H边钢筋</label></div>
    <div class="form-check"><input class="form-check-input" type="checkbox" id="c2" checked><label for="c2">B边钢筋</label></div>
    <div class="form-check"><input class="form-check-input" type="checkbox" id="c3" checked><label for="c3">角筋</label></div>
    <div class="form-check"><input class="form-check-input" type="checkbox" id="c4" checked><label for="c4">箍筋</label></div>
    <div class="form-check"><input class="form-check-input" type="checkbox" id="c5" checked><label for="c5">上层柱插筋下插长度</label></div>
    <div class="form-check"><input class="form-check-input" type="checkbox" id="c6"><label for="c6">显示其它图元</label></div>
    <div class="form-check"><input class="form-check-input" type="checkbox" id="c7" checked><label for="c7">显示详细公式</label></div>
   </div></div>
   <div class="vbar">
    <button aria-label="动态观察"><svg viewBox="0 0 20 22"><circle cx="10" cy="11" r="9" class="n"/><ellipse cx="10" cy="11" rx="11" ry="5" transform="rotate(-40 10 11)" class="b"/></svg></button>
    <button aria-label="二维"><svg viewBox="0 0 20 22"><rect x="1" y="1" width="18" height="19" rx="1" class="n"/><text x="3" y="17" font-size="8" font-weight="700" fill="#1a73e8">2D</text></svg></button>
    <button aria-label="俯视"><svg viewBox="0 0 20 22"><path d="M1 6l4-5h14l-4 5z" class="b lf"/><path d="M1 6h14v15H1zM19 1v15l-4 5" class="n"/></svg></button><span class="cr"></span>
    <button aria-label="实体"><svg viewBox="0 0 20 22"><path d="M1 6l4-5h14v15l-4 5H1zM1 6h14v15M15 6l4-5" class="b lf"/></svg></button><span class="cr"></span>
    <button aria-label="全屏"><svg viewBox="0 0 20 22"><path d="M1 7V2h6M13 2h6v5M1 15v5h6M13 20h6v-5" class="n"/></svg></button>
    <button aria-label="框选"><svg viewBox="0 0 20 22"><rect x="1" y="1" width="18" height="20" class="n" stroke-dasharray="3 2"/><path d="M10 5l6 3v6l-6 4-6-4V8zM4 8l6 3 6-3" class="b lf"/></svg></button><hr>
    <button aria-label="列表"><svg viewBox="0 0 20 22"><rect x="1" y="1" width="18" height="20" rx="1" class="n"/><path d="M5 7h10M5 11h10M5 15h10" class="n" stroke-dasharray="4 1"/></svg></button>
   </div>
   <button class="flap rt" aria-label="收起右侧"><svg width="6" height="10"><path d="M1 1l4 4-4 4" fill="none" stroke="#bbb"/></svg></button>
   <button class="flap bt" aria-label="收起底部"><svg width="10" height="6"><path d="M1 1l4 4 4-4" fill="none" stroke="#bbb"/></svg></button>
  </section>

  <section class="pane flex-grow-1 d-flex flex-column">
   <div class="phead d-flex align-items-center"><span class="grip"></span><span class="ptitle">编辑钢筋</span><button class="xbtn" aria-label="关闭"><svg width="10" height="10"><use href="#i-x"/></svg></button></div>
   <div class="etools d-flex align-items-center">
    <div class="steps d-flex">
    <button class="tool" disabled aria-label="首行"><svg class="ic" viewBox="0 0 16 16"><path d="M1 2v12M10 3v10L4 8z" class="g"/></svg></button><button class="tool" disabled aria-label="上一行"><svg class="ic" viewBox="0 0 16 16"><path d="M10 3v10L4 8z" class="g"/></svg></button><button class="tool" aria-label="下一行"><svg class="ic" viewBox="0 0 16 16"><path d="M3 2v12l7-6z" class="b"/></svg></button><button class="tool" aria-label="末行"><svg class="ic" viewBox="0 0 16 16"><path d="M3 2v12l7-6zM12 2v12" class="b"/></svg></button></div>
    <button class="tool me-2" disabled aria-label="上移"><svg class="ic" viewBox="0 0 16 16"><rect x="1" y="1" width="14" height="14" rx="1" class="g"/><path d="M8 12V4M5 7l3-3 3 3" class="g"/></svg></button>
    <button class="tool ms-1" aria-label="下移"><svg class="ic" viewBox="0 0 16 16"><rect x="1" y="1" width="14" height="14" rx="1" class="n"/><path d="M8 4v8M5 9l3 3 3-3" class="b"/></svg></button>
    <div class="acts d-flex align-items-center">
    <button class="tool"><svg class="ic"><use href="#i-ins"/></svg>插入</button><button class="tool"><svg class="ic"><use href="#i-del"/></svg>删除</button><button class="tool"><svg class="ic"><use href="#i-ruler"/></svg>缩尺配筋</button><button class="tool"><svg class="ic"><use href="#i-info"/></svg>钢筋信息</button><button class="tool"><svg class="ic"><use href="#i-lib"/></svg>钢筋图库</button><button class="tool">其他<span class="cr"></span></button><span>单构件钢筋总重(kg)：112.852</span></div>
   </div>
   <div class="ewrap">
   <table class="rebar">
    <colgroup><col><col><col><col><col><col><col><col><col><col><col><col><col><col><col><col><col></colgroup>
    <thead><tr><th></th><th class="sel">筋号</th><th>直径(mm)</th><th>级别</th><th>图号</th><th>图形</th><th>计算公式</th><th>公式描述</th><th><div class="two">弯曲调整</div></th><th>长度</th><th>根数</th><th>搭接</th><th>损耗(%)</th><th>单重(kg)</th><th>总重(kg)</th><th>钢筋归类</th><th>搭接形式</th></tr></thead>
    <tbody>
    <tr><td class="no on">1</td><td class="act">角筋.1</td><td>18</td><td><svg class="phi mx-auto"><use href="#i-phi"/></svg></td><td>18</td><td class="sp"><svg width="215" height="45"><text x="15" y="31" font-size="14">270</text><text x="107" y="25" font-size="13" fill="red">1090</text><path d="M43 16v17h168" fill="none" stroke="#000" stroke-width="2"/></svg></td><td>150-20+1000-40+15*d</td><td class="ds">柱实际高<br>度-保…</td><td>37</td><td>1323</td><td>4</td><td>0</td><td>0</td><td>2.646</td><td>10.584</td><td class="zh">直筋</td><td class="zh">电渣压力焊</td></tr>
    <tr><td class="no">2</td><td class="mx">B边纵筋.1</td><td>18</td><td><svg class="phi mx-auto"><use href="#i-phi"/></svg></td><td>18</td><td class="sp"><svg width="215" height="45"><text x="15" y="31" font-size="14">270</text><text x="107" y="25" font-size="13" fill="red">1090</text><path d="M43 16v17h168" fill="none" stroke="#000" stroke-width="2"/></svg></td><td>150-20+1000-40+15*d</td><td class="ds">柱实际高<br>度-保…</td><td>37</td><td>1323</td><td>6</td><td>0</td><td>0</td><td>2.646</td><td>15.876</td><td class="zh">直筋</td><td class="zh">电渣压力焊</td></tr>
    <tr><td class="no">3</td><td class="mx">H边纵筋.1</td><td>18</td><td><svg class="phi mx-auto"><use href="#i-phi"/></svg></td><td>18</td><td class="sp"><svg width="215" height="45"><text x="15" y="31" font-size="14">270</text><text x="107" y="25" font-size="13" fill="red">1090</text><path d="M43 16v17h168" fill="none" stroke="#000" stroke-width="2"/></svg></td><td>150-20+1000-40+15*d</td><td class="ds">柱实际高<br>度-保…</td><td>37</td><td>1323</td><td>6</td><td>0</td><td>0</td><td>2.646</td><td>15.876</td><td class="zh">直筋</td><td class="zh">电渣压力焊</td></tr>
    <tr><td class="no">4</td><td class="mx">箍筋.1</td><td>10</td><td><svg class="phi mx-auto"><use href="#i-phi"/></svg></td><td>195</td><td class="sp"><svg width="215" height="45"><text x="55" y="29" font-size="20">740</text><text x="107" y="35" font-size="20" fill="red">740</text><rect x="105" y="4" width="61" height="39" rx="1" fill="none" stroke="#000" stroke-width="2"/><path d="M142 15l15-10M153 24l11-13" stroke="#000" stroke-width="2"/></svg></td><td>2*(740+740)+2*(12.89*d)</td><td></td><td>62</td><td>3156</td><td>16</td><td>0</td><td>0</td><td>1.947</td><td>31.152</td><td class="zh">箍筋</td><td class="zh">绑扎</td></tr>
    <tr><td class="no">5</td><td class="mx">箍筋.2</td><td>10</td><td><svg class="phi mx-auto"><use href="#i-phi"/></svg></td><td>195</td><td class="sp"><svg width="215" height="45"><text x="55" y="29" font-size="20">389</text><text x="107" y="35" font-size="20" fill="red">740</text><rect x="105" y="4" width="61" height="39" rx="1" fill="none" stroke="#000" stroke-width="2"/><path d="M142 15l15-10M153 24l11-13" stroke="#000" stroke-width="2"/></svg></td><td>2*(740+389)+2*(12.89*d)</td><td></td><td>62</td><td>2454</td><td>26</td><td>0</td><td>0</td><td>1.514</td><td>39.364</td><td class="zh">箍筋</td><td class="zh">绑扎</td></tr>
    <tr class="last"><td class="no">6</td><td></td><td></td><td></td><td></td><td></td><td></td><td></td><td></td><td></td><td></td><td></td><td></td><td></td><td></td><td></td><td></td></tr>
    </tbody>
   </table>
   <div class="tgrow mb-1"></div>
   </div>
   <div class="hbar"></div>
  </section>
 </div>

 <aside class="pane disp">
  <div class="phead d-flex align-items-center"><span class="grip"></span><span class="ptitle">显示设置</span></div>
  <div class="dtabs d-flex"><button class="on">图元显示</button><button>楼层显示</button></div>
  <ul class="tree">
   <li class="th">图层</li><li><i></i>所有构件</li>
   <li class="c2"><i></i>轴线</li><li class="c3">轴网</li><li class="c3">辅助轴线</li>
   <li class="c2"><i></i>柱</li><li class="c3">柱</li><li class="c3">构造柱</li><li class="c3">砌体柱</li><li class="c3">约束边缘</li>
   <li class="c2"><i></i>墙</li><li class="c3">剪力墙</li><li class="c3">人防门框墙</li><li class="c3">砌体墙</li><li class="c3">砌体加筋</li><li class="c3">保温墙</li><li class="c3">暗梁</li><li class="c3">墙垛</li><li class="c3">幕墙</li>
   <li class="c2"><i></i>门窗洞</li><li class="c3">门</li><li class="c3">窗</li><li class="c3">门联窗</li><li class="c3">墙洞</li><li class="c3">带形窗</li><li class="c3">带形洞</li><li class="c3">飘窗</li><li class="c3">老虎窗</li><li class="c3">过梁</li><li class="c3">壁龛</li>
   <li class="c2"><i></i>梁</li><li class="c3">梁</li><li class="c3">连梁</li><li class="c3">圈梁</li>
   <li class="c2"><i></i>板</li>
  </ul>
  <div class="wmark"><b>激活 Windows</b>转到“设置”以激活</div>
 </aside>
</main>

<footer class="status d-flex">
 <span class="s1">层高： &nbsp;1.5</span><span class="s2">标高： &nbsp;-1.5~0</span><span class="s3">选中图元：1(4)</span><span class="s4">隐藏图元：0</span>
 <button class="sbt" aria-label="正交"><svg class="ic" viewBox="0 0 16 16"><path d="M4 2v12M4 9h4v5" class="n"/></svg></button>
 <button class="sbt w on" aria-label="捕捉"><svg class="ic" viewBox="0 0 16 16"><path d="M3 14V3h11v11" class="n"/><circle cx="3" cy="3" r="2" class="b"/></svg><span class="cr ms-2"></span></button>
 <button class="sbt" aria-label="交点"><svg class="ic" viewBox="0 0 16 16"><path d="M1 1l14 14M15 1L1 15" class="n"/></svg></button>
 <button class="sbt w" aria-label="中点"><svg class="ic" viewBox="0 0 16 16"><path d="M1 15L13 2M5 6l5 4" class="n"/></svg><span class="cr ms-2"></span></button>
 <button class="sbt w" aria-label="偏移量"><svg class="ic" viewBox="0 0 16 16"><path d="M1 5h7M4.500 1v8M8 12h7" class="n"/></svg><span class="cr ms-2"></span></button>
 <button class="sbt" aria-label="图层"><svg class="ic" viewBox="0 0 16 16"><rect x="1" y="1" width="11" height="11" class="n"/><path d="M3 3h8v8H3z" fill="#4a5166"/><path d="M14 3v8" class="n"/></svg></button>
 <button class="sbt" aria-label="弧线"><svg class="ic" viewBox="0 0 16 16"><path d="M2 14C2 6 6 3 14 2" class="n"/><path d="M9 8l5 5-4 1z" class="n"/></svg></button>
 <svg width="18" height="18" class="ms-2 mt-1"><path d="M10 8l7-7M11 1h6v6M8 10l-7 7M1 11v6h6" class="n"/></svg>
</footer>
<script src="https://cdn.jsdelivr.net/npm/bootstrap@5.3.0/dist/js/bootstrap.bundle.min.js"></script>
</body>
</html>
